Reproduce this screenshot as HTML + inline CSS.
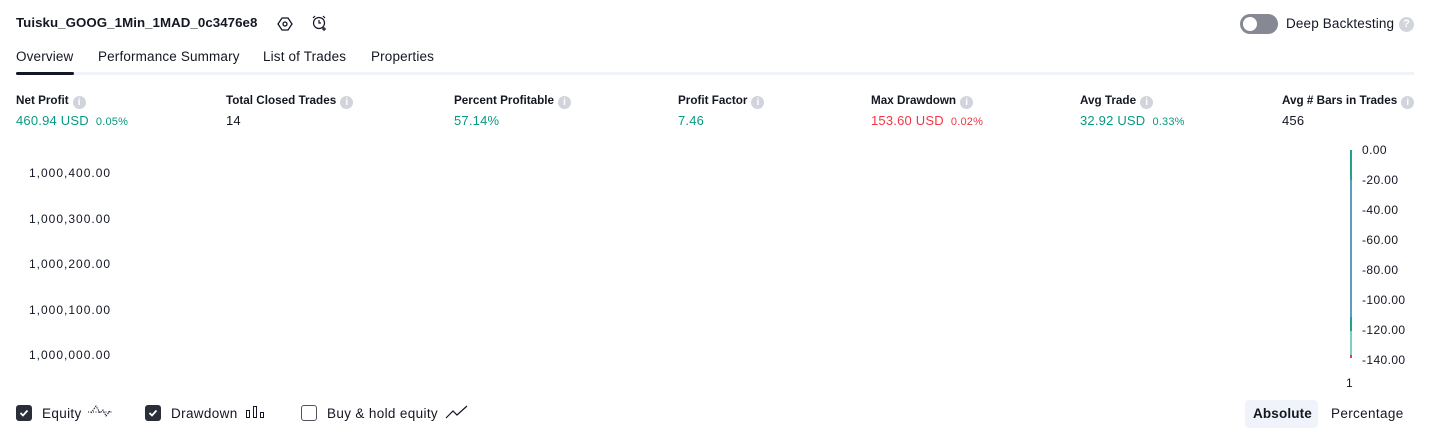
<!DOCTYPE html>
<html><head><style>
body{margin:0;width:1431px;height:438px;background:#fff;font-family:"Liberation Sans",sans-serif;color:#131722;position:relative;overflow:hidden}
.a{position:absolute;white-space:nowrap}
.t{font-size:13.5px;letter-spacing:.15px}
.lb{font-size:11.7px;font-weight:bold;line-height:14px}
.v{font-size:13px;line-height:14px;letter-spacing:.2px}
.g{color:#089981}.r{color:#f23645}
.s{font-size:11px}
.i{display:inline-block;width:13px;height:13px;border-radius:50%;background:#d1d4dc;vertical-align:-1px;margin-left:4px;color:#fff;font-size:10px;text-align:center;line-height:13px;font-weight:bold}
.ax{font-size:12px;color:#131722;letter-spacing:1px}
.axr{font-size:12px;color:#131722;letter-spacing:.4px}
.cb{position:absolute;width:16px;height:16px;border-radius:3px;background:#2a2e39}
.cb svg{position:absolute;left:3px;top:3px}
.bt{font-size:13.5px;letter-spacing:.35px}
</style></head><body>
<div class="a" style="left:16px;top:15px;font-size:13.3px;font-weight:bold;letter-spacing:.05px">Tuisku_GOOG_1Min_1MAD_0c3476e8</div>
<svg class="a" style="left:277px;top:16px" width="16" height="16" viewBox="0 0 16 16"><path d="M5 2h6l4 6-4 6H5L1 8z" fill="none" stroke="#131722" stroke-width="1.3"/><circle cx="8" cy="8" r="2" fill="none" stroke="#131722" stroke-width="1.3"/></svg>
<svg class="a" style="left:311px;top:14px" width="18" height="18" viewBox="0 0 18 18"><circle cx="8" cy="9" r="5.5" fill="none" stroke="#131722" stroke-width="1.2"/><path d="M8 6v3h2M2 4l2-2M14 4l-2-2M13 13v4M11 15h4" fill="none" stroke="#131722" stroke-width="1.2"/></svg>
<div class="a" style="left:1240px;top:14px;width:38px;height:20px;border-radius:10px;background:#868993"></div>
<div class="a" style="left:1243px;top:17px;width:14px;height:14px;border-radius:50%;background:#fff"></div>
<div class="a t" style="left:1286px;top:16px">Deep Backtesting</div>
<div class="a" style="left:1399px;top:17px;width:15px;height:15px;border-radius:50%;background:#d1d4dc;color:#fff;font-size:11px;font-weight:bold;text-align:center;line-height:15px">?</div>
<div class="a t" style="left:16px;top:49px">Overview</div>
<div class="a t" style="left:98px;top:49px">Performance Summary</div>
<div class="a t" style="left:263px;top:49px">List of Trades</div>
<div class="a t" style="left:371px;top:49px">Properties</div>
<div class="a" style="left:16px;top:72px;width:1398px;height:3px;background:#f0f3fa"></div>
<div class="a" style="left:16px;top:72px;width:58px;height:3px;border-radius:2px;background:#131722"></div>

<div class="a" style="left:16px;top:94px"><div class="lb">Net Profit<span class="i">i</span></div><div class="v g" style="margin-top:5px">460.94 USD <span class="s">&nbsp;0.05%</span></div></div>
<div class="a" style="left:226px;top:94px"><div class="lb">Total Closed Trades<span class="i">i</span></div><div class="v" style="margin-top:5px">14</div></div>
<div class="a" style="left:454px;top:94px"><div class="lb">Percent Profitable<span class="i">i</span></div><div class="v g" style="margin-top:5px">57.14%</div></div>
<div class="a" style="left:678px;top:94px"><div class="lb">Profit Factor<span class="i">i</span></div><div class="v g" style="margin-top:5px">7.46</div></div>
<div class="a" style="left:871px;top:94px"><div class="lb">Max Drawdown<span class="i">i</span></div><div class="v r" style="margin-top:5px">153.60 USD <span class="s">&nbsp;0.02%</span></div></div>
<div class="a" style="left:1080px;top:94px"><div class="lb">Avg Trade<span class="i">i</span></div><div class="v g" style="margin-top:5px">32.92 USD <span class="s">&nbsp;0.33%</span></div></div>
<div class="a" style="left:1282px;top:94px"><div class="lb">Avg # Bars in Trades<span class="i">i</span></div><div class="v" style="margin-top:5px">456</div></div>

<div class="a ax" style="left:29px;top:166px">1,000,400.00</div>
<div class="a ax" style="left:29px;top:212px">1,000,300.00</div>
<div class="a ax" style="left:29px;top:257px">1,000,200.00</div>
<div class="a ax" style="left:29px;top:303px">1,000,100.00</div>
<div class="a ax" style="left:29px;top:348px">1,000,000.00</div>

<div class="a" style="left:1350px;top:150px;width:2px;height:205px;background:#5b9cc0"></div>
<div class="a" style="left:1350px;top:150px;width:2px;height:30px;background:#22a08a"></div>
<div class="a" style="left:1350px;top:317px;width:2px;height:14px;background:#22a08a"></div>
<div class="a" style="left:1350px;top:331px;width:2px;height:24px;background:#7fcfbf"></div>
<div class="a" style="left:1350px;top:355px;width:2px;height:3px;background:#f23645"></div>
<div class="a axr" style="left:1362px;top:143px">0.00</div>
<div class="a axr" style="left:1362px;top:173px">-20.00</div>
<div class="a axr" style="left:1362px;top:203px">-40.00</div>
<div class="a axr" style="left:1362px;top:233px">-60.00</div>
<div class="a axr" style="left:1362px;top:263px">-80.00</div>
<div class="a axr" style="left:1362px;top:293px">-100.00</div>
<div class="a axr" style="left:1362px;top:323px">-120.00</div>
<div class="a axr" style="left:1362px;top:353px">-140.00</div>
<div class="a axr" style="left:1346px;top:376px">1</div>

<div class="cb" style="left:16px;top:405px"><svg width="10" height="10" viewBox="0 0 10 10"><path d="M1.5 5l2.5 2.5 4.5-5" fill="none" stroke="#fff" stroke-width="1.8"/></svg></div>
<div class="a bt" style="left:42px;top:406px">Equity</div>
<svg class="a" style="left:87px;top:403px" width="26" height="16" viewBox="0 0 26 16"><path d="M1 9h24" stroke="#131722" stroke-dasharray="1 1.5"/><path d="M4 10l5-7 4 7 3-3 3 6 4-5" fill="none" stroke="#131722" stroke-dasharray="1.5 1"/></svg>
<div class="cb" style="left:145px;top:405px"><svg width="10" height="10" viewBox="0 0 10 10"><path d="M1.5 5l2.5 2.5 4.5-5" fill="none" stroke="#fff" stroke-width="1.8"/></svg></div>
<div class="a bt" style="left:171px;top:406px">Drawdown</div>
<svg class="a" style="left:246px;top:405px" width="20" height="16" viewBox="0 0 20 16"><rect x="0.5" y="5.5" width="3" height="7" fill="none" stroke="#131722"/><rect x="7.5" y="1.5" width="3" height="11" fill="none" stroke="#131722"/><rect x="14.5" y="7.5" width="3" height="5" fill="none" stroke="#131722"/></svg>
<div class="a" style="left:301px;top:405px;width:14px;height:14px;border:1px solid #50535e;border-radius:3px"></div>
<div class="a bt" style="left:327px;top:406px">Buy &amp; hold equity</div>
<svg class="a" style="left:445px;top:404px" width="24" height="16" viewBox="0 0 24 16"><path d="M1 14l7-7 4 4 10-9" fill="none" stroke="#131722" stroke-width="1.2"/></svg>
<div class="a" style="left:1245px;top:400px;width:73px;height:28px;border-radius:4px;background:#f0f3fa"></div>
<div class="a t" style="left:1253px;top:406px;font-weight:bold">Absolute</div>
<div class="a bt" style="left:1331px;top:406px">Percentage</div>
</body></html>
